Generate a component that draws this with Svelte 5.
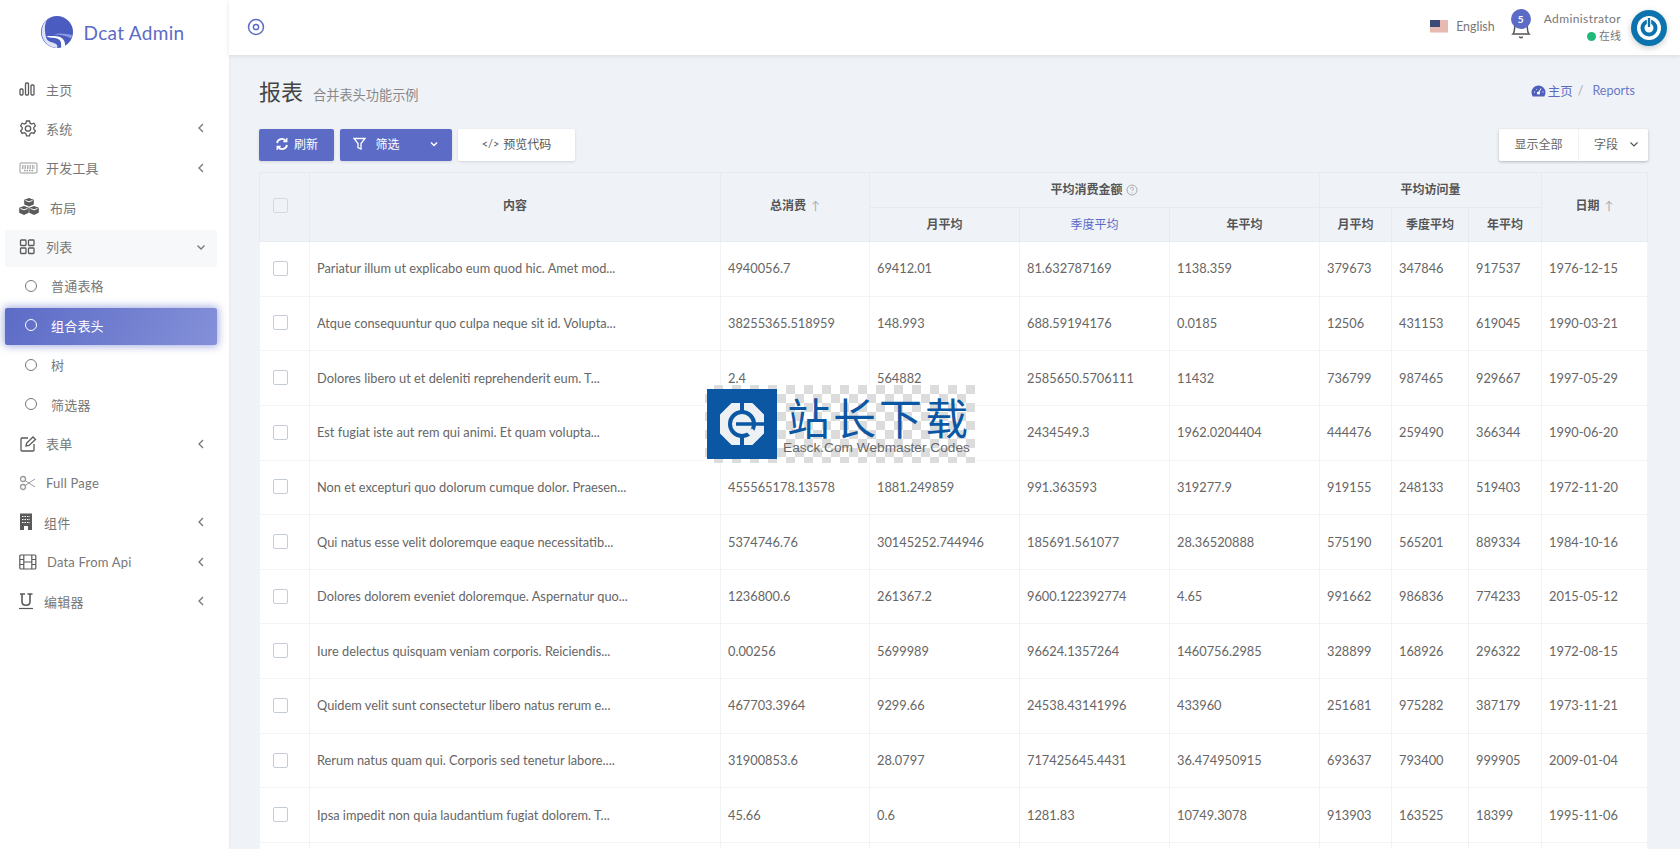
<script>
  const menu = [
    { icon: 'bars', label: '主页', gap: 7 },
    { icon: 'gear', label: '系统', arrow: 'left', gap: 7 },
    { icon: 'keyboard', label: '开发工具', arrow: 'left', gap: 7 },
    { icon: 'cubes', label: '布局', gap: 11 },
    { icon: 'grid', label: '列表', arrow: 'down', open: true, gap: 7 },
    { label: '普通表格', child: true },
    { label: '组合表头', child: true, active: true },
    { label: '树', child: true },
    { label: '筛选器', child: true },
    { icon: 'edit', label: '表单', arrow: 'left', gap: 7 },
    { icon: 'scissors', label: 'Full Page', gap: 7 },
    { icon: 'building', label: '组件', arrow: 'left', gap: 5 },
    { icon: 'film', label: 'Data From Api', arrow: 'left', gap: 8 },
    { icon: 'underline', label: '编辑器', arrow: 'left', gap: 5 }
  ];

  const rows = [
    ['Pariatur illum ut explicabo eum quod hic. Amet mod...', '4940056.7', '69412.01', '81.632787169', '1138.359', '379673', '347846', '917537', '1976-12-15'],
    ['Atque consequuntur quo culpa neque sit id. Volupta...', '38255365.518959', '148.993', '688.59194176', '0.0185', '12506', '431153', '619045', '1990-03-21'],
    ['Dolores libero ut et deleniti reprehenderit eum. T...', '2.4', '564882', '2585650.5706111', '11432', '736799', '987465', '929667', '1997-05-29'],
    ['Est fugiat iste aut rem qui animi. Et quam volupta...', '', '', '2434549.3', '1962.0204404', '444476', '259490', '366344', '1990-06-20'],
    ['Non et excepturi quo dolorum cumque dolor. Praesen...', '455565178.13578', '1881.249859', '991.363593', '319277.9', '919155', '248133', '519403', '1972-11-20'],
    ['Qui natus esse velit doloremque eaque necessitatib...', '5374746.76', '30145252.744946', '185691.561077', '28.36520888', '575190', '565201', '889334', '1984-10-16'],
    ['Dolores dolorem eveniet doloremque. Aspernatur quo...', '1236800.6', '261367.2', '9600.122392774', '4.65', '991662', '986836', '774233', '2015-05-12'],
    ['Iure delectus quisquam veniam corporis. Reiciendis...', '0.00256', '5699989', '96624.1357264', '1460756.2985', '328899', '168926', '296322', '1972-08-15'],
    ['Quidem velit sunt consectetur libero natus rerum e...', '467703.3964', '9299.66', '24538.43141996', '433960', '251681', '975282', '387179', '1973-11-21'],
    ['Rerum natus quam qui. Corporis sed tenetur labore....', '31900853.6', '28.0797', '717425645.4431', '36.474950915', '693637', '793400', '999905', '2009-01-04'],
    ['Ipsa impedit non quia laudantium fugiat dolorem. T...', '45.66', '0.6', '1281.83', '10749.3078', '913903', '163525', '18399', '1995-11-06']
  ];
</script>

<div class="layout">
  <aside class="sidebar">
    <div class="brand">
      <svg width="32" height="32" viewBox="0 0 32 32">
        <circle cx="16" cy="16" r="16" fill="#4a5cc0" />
        <path d="M6 3.500C-1 10-1 22 6 28c3 2.500 6 3.500 10 4 1-2 0-3.500-2-4.500-3-1.500-7-1.500-8.500-5C3.500 17 3 9 6 3.500z" fill="#dfe3f7" />
        <path d="M5.500 20c4 3 9 1 12.500 3.500 2 1.500 2.500 4 2 8 1.500-.3 3-1 4-1.500.5-4-1.500-7.500-5-9-4-1.500-9-1-13.500-1z" fill="#fff" />
        <path d="M13 18.500c6-2 12-.5 18 .5l-.8 3.500c-5-3-11-4-17.200-4z" fill="#8f9be0" />
      </svg>
      <span>Dcat Admin</span>
    </div>

    <nav class="menu">
      {#each menu as item}
        <div class="item" class:child={item.child} class:open={item.open} class:active={item.active}>
          {#if item.child}
            <span class="dot"></span>
          {:else}
            <svg class="ico" class:soft={item.icon === 'keyboard' || item.icon === 'scissors'} style="margin-right: {item.gap}px" width="20" height="18" viewBox="0 0 20 18" fill="none" stroke="currentColor" stroke-width="1.3">
              {#if item.icon === 'bars'}
                <rect x="1" y="9" width="3" height="6" rx="1" /><rect x="6.500" y="3" width="3" height="12" rx="1" /><rect x="12" y="5" width="3" height="10" rx="1" />
              {:else if item.icon === 'gear'}
                <path d="M7.500 2h3l.6 2.200 1.600.8 2.200-.8 1.500 2.600-1.600 1.600v1.800l1.600 1.600-1.500 2.600-2.200-.7-1.600.9-.6 2.300h-3l-.6-2.300-1.600-.9-2.200.7-1.500-2.600 1.600-1.600V8.400L1.600 6.800 3.100 4.200l2.200.8 1.600-.8z" /><circle cx="9" cy="9.500" r="2.700" />
              {:else if item.icon === 'keyboard'}
                <rect x="1" y="4" width="17" height="10" rx="1" stroke-width="1" /><path d="M3 7h13M3 9h13M5 11.500h9" stroke-dasharray="1.500 1" />
              {:else if item.icon === 'cubes'}
                <g fill="currentColor" stroke="none"><path d="M10 0l4.800 1.800v4.800L10 8.500 5.200 6.600V1.800z" /><path d="M5 8l4.800 1.800v5L5 17 .2 14.800v-5z" /><path d="M15 8l4.800 1.800v5L15 17l-4.800-2.200v-5z" /></g><path d="M6.500 2.500L10 3.800l3.500-1.300M1.500 10.500L5 11.800l3.500-1.300M11.500 10.500l3.500 1.300 3.500-1.300" stroke="#fff" stroke-width="1" />
              {:else if item.icon === 'grid'}
                <rect x="1.500" y="2" width="5.500" height="5.500" rx=".8" /><rect x="9.500" y="2" width="5.500" height="5.500" rx=".8" /><rect x="1.500" y="10" width="5.500" height="5.500" rx=".8" /><rect x="9.500" y="10" width="5.500" height="5.500" rx=".8" />
              {:else if item.icon === 'edit'}
                <path d="M9 3H3a1 1 0 0 0-1 1v11a1 1 0 0 0 1 1h11a1 1 0 0 0 1-1V9" /><path d="M7 11l.7-3L14 2l2.500 2.500L10 10.500z" />
              {:else if item.icon === 'scissors'}
                <circle cx="4" cy="5" r="2.500" /><circle cx="4" cy="13" r="2.500" /><path d="M6 6.500L16 13M6 11.500L16 5" stroke-width="1" />
              {:else if item.icon === 'building'}
                <rect x="1" y="0.500" width="12" height="16.500" fill="currentColor" stroke="none" /><path d="M3 3.500h8M3 6.500h8M3 9.500h8" stroke="#fff" stroke-width="1" stroke-dasharray="1.500 1" /><rect x="5" y="13" width="4" height="4" fill="#fff" stroke="none" />
              {:else if item.icon === 'film'}
                <rect x="0.800" y="2" width="16" height="14" rx="1" stroke-width="1.200" /><path d="M4.800 2v14M12.800 2v14M.8 6.500h4M.8 11.500h4M12.800 6.500h4M12.800 11.500h4M4.800 9h8" stroke-width="1.200" />
              {:else if item.icon === 'underline'}
                <path d="M1 2h5M8.500 2h5M3 2v7.500c0 5 8 5 8 0V2" stroke-width="1.600" /><path d="M0 16.500h14" stroke-width="1.200" />
              {/if}
            </svg>
          {/if}
          <span class="label">{item.label}</span>
          {#if item.arrow === 'left'}
            <svg class="arrow" width="10" height="10" viewBox="0 0 10 10" fill="none" stroke="currentColor" stroke-width="1.300"><path d="M7 1L3 5l4 4" /></svg>
          {:else if item.arrow === 'down'}
            <svg class="arrow" width="10" height="10" viewBox="0 0 10 10" fill="none" stroke="currentColor" stroke-width="1.300"><path d="M1.500 3.500L5 7l3.500-3.500" /></svg>
          {/if}
        </div>
      {/each}
    </nav>
  </aside>

  <div class="main">
    <header class="navbar">
      <svg class="target" width="18" height="18" viewBox="0 0 18 18" fill="none" stroke="#5c6bc6" stroke-width="1.500"><circle cx="9" cy="9" r="7.500" /><circle cx="9" cy="9" r="2.600" /></svg>
      <div class="nav-right">
        <svg class="flag" width="18" height="13" viewBox="0 0 18 13">
          <rect width="18" height="13" fill="#f3d9d3" />
          <path d="M0 1h18M0 3h18M0 5h18M0 7h18M0 9h18M0 11h18" stroke="#d99a90" stroke-width="1" />
          <rect width="10" height="7" fill="#3c4a78" />
        </svg>
        <span class="lang">English</span>
        <div class="bell">
          <svg width="20" height="27" viewBox="0 0 20 27" fill="none" stroke="#555" stroke-width="1.500"><path d="M2 20c2-2 1.500-6 2-12h12c.5 6 0 10 2 12zM8.500 22.500c0 1.500 3 1.500 3 0" /></svg>
          <span class="badge">5</span>
        </div>
        <div class="user">
          <div class="user-name">Administrator</div>
          <div class="user-status"><i></i>在线</div>
        </div>
        <svg class="avatar" width="36" height="36" viewBox="0 0 36 36">
          <circle cx="18" cy="18" r="18" fill="#0b74ae" />
          <circle cx="18" cy="18" r="12" fill="#fff" />
          <circle cx="18" cy="18" r="6.500" fill="none" stroke="#0b74ae" stroke-width="4" />
          <rect x="16.300" y="7.500" width="3.400" height="10" fill="#0b74ae" stroke="#fff" stroke-width="1" />
        </svg>
      </div>
    </header>

    <div class="content">
      <div class="page-head">
        <h1>报表</h1>
        <small>合并表头功能示例</small>
        <div class="crumbs">
          <svg width="15" height="12" viewBox="0 0 15 12"><path d="M7.500 0.500a7 7 0 0 0-7 7c0 1.500.4 2.800 1.200 4h11.600c.8-1.200 1.200-2.500 1.200-4a7 7 0 0 0-7-7z" fill="#4e5fbd" /><circle cx="7.500" cy="8" r="1.600" fill="#fff" /><path d="M7.500 8L10 3.500M3 7h1M11.500 7h1M5 4l.6.6" stroke="#fff" stroke-width="1" /></svg>
          <span class="crumb-home">主页</span>
          <span class="sep">/</span>
          <span>Reports</span>
        </div>
      </div>

      <div class="toolbar">
        <button class="btn primary refresh">
          <svg width="14" height="14" viewBox="0 0 14 14" fill="none" stroke="#fff" stroke-width="1.800"><path d="M2 6a5 5 0 0 1 9-2M12 8a5 5 0 0 1-9 2" /><path d="M11.800 1v3.500H8.300M2.200 13V9.500h3.500" stroke-width="1.300" /></svg>
          刷新
        </button>
        <button class="btn primary filter">
          <svg width="13" height="13" viewBox="0 0 13 13" fill="none" stroke="#fff" stroke-width="1.300"><path d="M1 1.500h11L8 6.500V12L5 10.500v-4z" /></svg>
          筛选
          <svg class="caret" width="10" height="10" viewBox="0 0 10 10" fill="none" stroke="#fff" stroke-width="1.500"><path d="M2 3.500l3 3 3-3" /></svg>
        </button>
        <button class="btn white code"><span class="lt">&lt;/&gt;</span> 预览代码</button>
        <div class="right-tools">
          <button class="btn-part">显示全部</button>
          <button class="btn-part fields">字段
            <svg width="10" height="10" viewBox="0 0 10 10" fill="none" stroke="#555" stroke-width="1.200"><path d="M1.500 3.500L5 7l3.500-3.500" /></svg>
          </button>
        </div>
      </div>

      <table>
        <colgroup>
          <col style="width: 50px" /><col style="width: 411px" /><col style="width: 149px" /><col style="width: 150px" /><col style="width: 150px" /><col style="width: 150px" /><col style="width: 72px" /><col style="width: 77px" /><col style="width: 73px" /><col style="width: 106px" />
        </colgroup>
        <thead>
          <tr class="h1">
            <th class="c" rowspan="2"><span class="check head"></span></th>
            <th rowspan="2">内容</th>
            <th rowspan="2">总消费 <span class="sort">↑</span></th>
            <th colspan="3">平均消费金额
              <svg class="help" width="12" height="12" viewBox="0 0 12 12" fill="none" stroke="#aaa"><circle cx="6" cy="6" r="5" /><path d="M4.500 4.800a1.500 1.500 0 1 1 2 1.400c-.4.200-.5.500-.5.900M6 8.500v.8" /></svg>
            </th>
            <th colspan="3">平均访问量</th>
            <th rowspan="2">日期 <span class="sort">↑</span></th>
          </tr>
          <tr class="h2">
            <th>月平均</th>
            <th class="link">季度平均</th>
            <th>年平均</th>
            <th>月平均</th>
            <th>季度平均</th>
            <th>年平均</th>
          </tr>
        </thead>
        <tbody>
          {#each rows as row}
            <tr>
              <td class="c"><span class="check"></span></td>
              {#each row as cell}
                <td>{cell}</td>
              {/each}
            </tr>
          {/each}
          <!-- next row starts right at the fold -->
          <tr>
            {#each Array(10) as _}
              <td></td>
            {/each}
          </tr>
        </tbody>
      </table>
    </div>
  </div>

  <div class="watermark">
    <div class="wm-logo">
      <svg width="46" height="46" viewBox="0 0 46 46">
        <path d="M13 3h20l11 11v18L33 43H13L2 32V14z" fill="#eef1f4" stroke="#eef1f4" stroke-width="2" stroke-linejoin="round" />
        <circle cx="23" cy="23" r="12" fill="none" stroke="#0b57a4" stroke-width="4" />
        <path d="M17 23h29" stroke="#0b57a4" stroke-width="3.500" />
        <path d="M23 0v11M23 35v11" stroke="#0b57a4" stroke-width="4" />
        <path d="M33 27.500l3 3-4 5-5-5z" fill="#eef1f4" />
      </svg>
    </div>
    <div class="wm-text">
      <div class="wm-cn">站长下载</div>
      <div class="wm-en">Easck.Com Webmaster Codes</div>
    </div>
  </div>
</div>

<style>
  :global(body) {
    margin: 0;
    overflow: hidden;
    background: #eff3f8;
    font-family: Lato, "Noto Sans CJK SC", sans-serif;
    font-size: 13px;
    color: #666;
  }

  .layout {
    position: relative;
    display: flex;
    height: 849px;
    overflow: hidden;
  }

  .sidebar {
    flex: 0 0 229px;
    background: #fff;
    box-shadow: 0 0 4px rgba(0, 0, 0, 0.05);
  }

  .brand {
    display: flex;
    align-items: center;
    justify-content: center;
    gap: 11px;
    height: 64px;
    font-size: 19px;
    letter-spacing: 0.3px;
    color: #5c6bc6;
    padding-right: 4px;
  }

  .menu {
    display: flex;
    flex-direction: column;
    gap: 2.400px;
    padding: 8px 12px 0 5px;
  }

  .item {
    display: flex;
    align-items: center;
    box-sizing: border-box;
    height: 37px;
    padding: 0 11px 3px 14px;
    color: #777;
    font-size: 13px;
    letter-spacing: 0.2px;
  }

  .item.open {
    background: #f7f8fa;
    border-radius: 2px;
  }

  .item.child {
    padding-left: 20px;
  }

  .item.active {
    color: #fff;
    background: linear-gradient(118deg, #5c6bc6, #8490d8);
    box-shadow: 0 0 8px 1px rgba(92, 107, 198, 0.6);
    border-radius: 2px;
  }

  .dot {
    width: 10px;
    height: 10px;
    border: 1.500px solid #777;
    border-radius: 50%;
    margin-right: 14px;
  }

  .active .dot {
    border-color: #fff;
  }

  .ico {
    flex: none;
    color: #5a5a5a;
  }

  .ico.soft {
    color: #999;
  }

  .label {
    flex: 1;
  }

  .arrow {
    color: #777;
  }

  .main {
    flex: 1;
    min-width: 0;
  }

  .navbar {
    display: flex;
    align-items: center;
    justify-content: space-between;
    height: 55px;
    background: #fff;
    box-shadow: 0 1px 5px rgba(0, 0, 0, 0.1);
    padding: 0 0 0 18px;
    position: relative;
  }

  .target {
    margin-top: -2px;
  }

  .nav-right {
    display: flex;
    align-items: center;
    padding: 0 13px 2px 0;
  }

  .flag {
    margin-right: 8px;
  }

  .lang {
    font-size: 12.400px;
    color: #777;
    margin-right: 16px;
  }

  .bell {
    position: relative;
    width: 20px;
    height: 37px;
    margin-right: 13px;
  }

  .bell svg {
    position: absolute;
    left: 0;
    top: 6px;
  }

  .badge {
    position: absolute;
    left: 0;
    top: 1px;
    width: 20px;
    height: 20px;
    border-radius: 50%;
    background: #5c6bc6;
    color: #fff;
    font-size: 10px;
    font-weight: 700;
    line-height: 20px;
    text-align: center;
  }

  .user {
    text-align: right;
    margin-right: 10px;
    color: #777;
  }

  .user-name {
    font-size: 12px;
    letter-spacing: 0.4px;
  }

  .user-status {
    font-size: 11px;
    margin-top: 1px;
  }

  .user-status i {
    display: inline-block;
    width: 9px;
    height: 9px;
    border-radius: 50%;
    background: #21b978;
    margin-right: 3px;
    vertical-align: -1px;
  }

  .avatar {
    margin-top: 2px;
    filter: drop-shadow(0 2px 3px rgba(0, 0, 0, 0.2));
  }

  .content {
    padding: 0 31px 0 30px;
  }

  .page-head {
    display: flex;
    align-items: baseline;
    height: 74px;
    padding-top: 19px;
    box-sizing: border-box;
  }

  h1 {
    margin: 0;
    font-size: 22px;
    font-weight: 400;
    color: #444;
    line-height: 36px;
  }

  small {
    font-size: 13.200px;
    color: #888;
    margin-left: 10px;
  }

  .crumbs {
    margin-left: auto;
    margin-right: 14px;
    color: #6a78c8;
    font-size: 12.500px;
    display: flex;
    align-items: center;
    align-self: flex-start;
    margin-top: 7px;
  }

  .crumb-home {
    color: #5c6bc6;
    margin-left: 2px;
  }

  .sep {
    color: #aaa;
    margin: 0 9px 0 5px;
  }

  .toolbar {
    display: flex;
    align-items: stretch;
    height: 32px;
    gap: 6px;
    margin-bottom: 11px;
  }

  button {
    font: inherit;
    border: 0;
    padding: 0 0 3px;
    display: flex;
    align-items: center;
    justify-content: center;
    font-size: 12px;
  }

  .btn {
    border-radius: 2px;
  }

  .primary {
    background: #5c6bc6;
    color: #fff;
    gap: 5px;
    box-shadow: 0 1px 3px rgba(0, 0, 0, 0.12);
  }

  .refresh {
    width: 75px;
  }

  .filter {
    width: 112px;
    gap: 9px;
  }

  .caret {
    margin-left: 20px;
  }

  .white {
    background: #fff;
    color: #555;
    box-shadow: 0 1px 3px rgba(0, 0, 0, 0.12);
  }

  .code {
    width: 117px;
    gap: 4px;
  }

  .lt {
    font-size: 11px;
  }

  .right-tools {
    display: flex;
    margin-left: auto;
    margin-right: 1px;
    background: #fff;
    border-radius: 2px;
    box-shadow: 0 1px 3px rgba(0, 0, 0, 0.25);
  }

  .btn-part {
    background: transparent;
    color: #666;
    width: 79px;
  }

  .fields {
    width: 70px;
    gap: 11px;
    padding-left: 6px;
    border-left: 1px solid #f1f1f1;
  }

  table {
    width: 1388px;
    table-layout: fixed;
    border-collapse: collapse;
    background: #fff;
  }

  th {
    background: #eff3f8;
    border: 1px solid #e7ebf0;
    font-size: 12px;
    font-weight: 700;
    color: #555;
    text-align: center;
    padding: 0 0 2px;
  }

  th[rowspan] {
    padding-bottom: 5px;
  }

  th[colspan] {
    padding-bottom: 4px;
  }

  .h1 th {
    height: 30px;
  }

  .h2 th {
    height: 31px;
  }

  th.link {
    color: #5c6bc6;
    font-weight: 400;
  }

  .sort {
    color: #aaa;
    font-weight: 400;
    margin-left: 2px;
  }

  .help {
    vertical-align: -2px;
    margin-left: 1px;
  }

  td {
    box-sizing: border-box;
    height: 54.650px;
    border: 1px solid #f1f3f6;
    padding: 0 7px 1px;
    font-size: 12.800px;
    color: #666;
    white-space: nowrap;
    overflow: hidden;
  }

  th.c {
    text-align: left;
    padding: 0 0 4px 13px;
  }

  td.c {
    padding: 0 0 1px 13px;
  }

  .check {
    display: block;
    box-sizing: border-box;
    width: 15px;
    height: 15px;
    border: 1.500px solid #c5ccd4;
    border-radius: 2px;
    background: #fff;
  }

  .check.head {
    background: #eff3f8;
    border-color: #d5dae0;
  }

  /* sits on top of the table, same as the stamped image */
  .watermark {
    position: absolute;
    left: 705px;
    top: 385px;
    width: 270px;
    height: 78px;
    display: flex;
    align-items: center;
    padding-left: 2px;
    box-sizing: border-box;
    background-color: #fff;
    background-image:
      linear-gradient(45deg, #dcdcdc 25%, transparent 25%, transparent 75%, #dcdcdc 75%),
      linear-gradient(45deg, #dcdcdc 25%, transparent 25%, transparent 75%, #dcdcdc 75%);
    background-size: 18px 18px;
    background-position: 0 0, 9px 9px;
  }

  .wm-logo {
    flex: none;
    width: 70px;
    height: 70px;
    background: #0b57a4;
    display: flex;
    align-items: center;
    justify-content: center;
  }

  .wm-text {
    margin-left: 6px;
    white-space: nowrap;
  }

  .wm-cn {
    font-family: "Noto Sans CJK SC", sans-serif;
    font-size: 43px;
    line-height: 46px;
    letter-spacing: 3px;
    color: #0b57a4;
    margin-left: 4px;
  }

  .wm-en {
    font-family: "Liberation Sans", sans-serif;
    font-size: 13.700px;
    line-height: 17px;
    color: #666;
  }
</style>
